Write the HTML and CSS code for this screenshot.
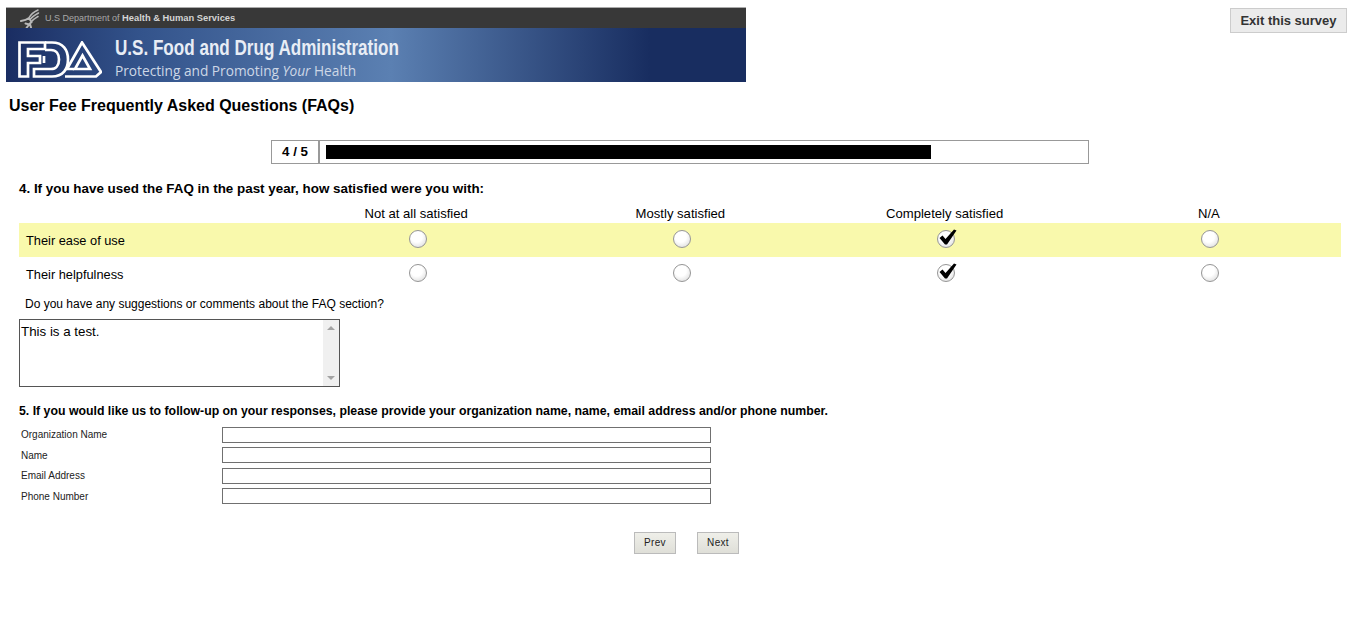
FILE: index.html
```html
<!DOCTYPE html>
<html lang="en">
<head>
<meta charset="utf-8">
<title>User Fee Frequently Asked Questions (FAQs)</title>
<link rel="stylesheet" href="styles.css">
</head>
<body>
<header class="top">
  <div class="banner">
    <div class="hhs">
      <svg class="eagle" width="20" height="20" viewBox="0 0 20 20" fill="none" stroke="#b8b8b8" stroke-linecap="round">
        <path d="M18 1 C14 3 11 5 9.500 8" stroke-width="1.600"/>
        <path d="M18.500 4 C15 6 12.500 7.500 10.500 10" stroke-width="1.600"/>
        <path d="M18 7.500 C15.500 9 13.500 10 12 12" stroke-width="1.600"/>
        <path d="M1 12 C4 11.500 7 10.500 9 9 L11.500 13 L9 15.500 L5.500 14.500 M9 15.500 L6.500 19 M10 15 L11 18.500" stroke-width="2"/>
      </svg>
      <span class="hhs-text">U.S Department of <b>Health &amp; Human Services</b></span>
    </div>
    <div class="fda">
      <svg class="fda-logo" width="84" height="37" viewBox="0 0 84 37" fill="none" stroke="#fff" stroke-width="2.700">
        <path d="M1.500 1.500 H27 V8 H10 V15 H22 V22 H10 V35.500 H1.500 Z"/>
        <path d="M27 1.500 H34 C45 1.500 50 9 50 18.500 C50 28 45 35.500 34 35.500 H16 V28 H33 C38 28 41 24 41 18.500 C41 13 38 9 33 9 H27"/>
        <path d="M26 15 V22"/>
        <path d="M47 35.500 H78 L83 31 L64 1.500 L49 28 H56"/>
        <path d="M57 28 H72 L64.500 14.500 Z"/>
      </svg>
      <div class="fda-text">
        <div class="fda-name">U.S. Food and Drug Administration</div>
        <div class="fda-tag">Protecting and Promoting <i>Your</i> Health</div>
      </div>
    </div>
  </div>
  <button class="exit" type="button">Exit this survey</button>
</header>

<h1 class="title">User Fee Frequently Asked Questions (FAQs)</h1>

<div class="progress">
  <div class="count">4 / 5</div>
  <div class="track"><div class="fill"></div></div>
</div>

<main class="survey">
  <p class="question q4">4. If you have used the FAQ in the past year, how satisfied were you with:</p>
  <table class="matrix">
    <thead>
      <tr>
        <th></th>
        <th>Not at all satisfied</th>
        <th>Mostly satisfied</th>
        <th>Completely satisfied</th>
        <th>N/A</th>
      </tr>
    </thead>
    <tbody>
      <tr class="hl">
        <td class="rowlabel">Their ease of use</td>
        <td><span class="radio"></span></td>
        <td><span class="radio"></span></td>
        <td><span class="radio"><svg class="check" width="18" height="17" viewBox="0 0 18 17"><path d="M0.500 9 L3.500 6.500 L6.500 10 L15 0.500 L17.500 1.500 L8 15.500 L6 15.500 Z" fill="#000"/></svg></span></td>
        <td><span class="radio"></span></td>
      </tr>
      <tr>
        <td class="rowlabel">Their helpfulness</td>
        <td><span class="radio"></span></td>
        <td><span class="radio"></span></td>
        <td><span class="radio"><svg class="check" width="18" height="17" viewBox="0 0 18 17"><path d="M0.500 9 L3.500 6.500 L6.500 10 L15 0.500 L17.500 1.500 L8 15.500 L6 15.500 Z" fill="#000"/></svg></span></td>
        <td><span class="radio"></span></td>
      </tr>
    </tbody>
  </table>
  <p class="comment-label">Do you have any suggestions or comments about the FAQ section?</p>
  <div class="comment">
    <div class="comment-text">This is a test.</div>
    <div class="scroll">
      <span class="arrow up"></span>
      <span class="arrow down"></span>
    </div>
  </div>

  <p class="question q5">5. If you would like us to follow-up on your responses, please provide your organization name, name, email address and/or phone number.</p>
  <div class="contact">
    <label class="field"><span>Organization Name</span><input type="text"></label>
    <label class="field"><span>Name</span><input type="text"></label>
    <label class="field"><span>Email Address</span><input type="text"></label>
    <label class="field"><span>Phone Number</span><input type="text"></label>
  </div>
  <div class="nav">
    <button class="navbtn" type="button">Prev</button>
    <button class="navbtn" type="button">Next</button>
  </div>
</main>
</body>
</html>
```
FILE: styles.css
```css
* { box-sizing: border-box; }
html, body { margin: 0; padding: 0; background: #fff; }
body { font-family: "Liberation Sans", Arial, sans-serif; color: #000; height: 639px; overflow: hidden; }

.top { display: flex; justify-content: space-between; align-items: flex-start; padding: 7px 11px 0 6px; }
.banner { width: 740px; height: 75px; display: flex; flex-direction: column; }
.hhs { height: 21px; background: #383838; border-top: 1px solid #aaa; display: flex; align-items: center; padding-left: 14px; gap: 5px; }
.eagle { flex: none; margin-top: 1px; }
.hhs-text { font-size: 9px; color: #a9a9a9; }
.hhs-text b { color: #d4d4d4; font-size: 9.35px; }
.fda { flex: 1; display: flex; align-items: flex-start; background: linear-gradient(90deg, #1a2d62 0, #33538b 18%, #5b80b2 52%, #182d60 87%, #182d60 100%); }
.fda-logo { flex: none; margin: 13px 0 0 12px; }
.fda-text { margin-left: 13px; }
.fda-name { font-size: 22px; font-weight: 700; color: #e8edf5; line-height: 24px; margin-top: 8px; white-space: nowrap; transform: scaleX(.776); transform-origin: left center; }
.fda-tag { font-family: "Open Sans", sans-serif; font-size: 13.7px; color: #cdd7e6; line-height: 18px; margin-top: 2px; white-space: nowrap; }

.exit { width: 117px; height: 25px; margin-top: 1px; border: 1px solid #ccc; background: #ebebeb; color: #333; font: 700 13px "Liberation Sans", sans-serif; padding: 0; }

.title { font-size: 16px; font-weight: 700; margin: 15px 0 0 9px; line-height: 18px; }

.progress { display: flex; width: 818px; height: 24px; margin: 25px 0 0 271px; border: 1px solid #999; }
.count { width: 48px; border-right: 2px solid #999; font-size: 13.33px; font-weight: 700; text-align: center; line-height: 22px; }
.track { flex: 1; padding: 4px 6px; }
.fill { width: 605px; height: 14px; background: #000; }

.survey { padding: 0 17px 0 19px; }
.question { margin: 0; font-weight: 700; font-size: 13.4px; line-height: 16px; }
.q4 { margin-top: 17px; }

.matrix { width: 100%; border-collapse: collapse; table-layout: fixed; margin-top: 8px; font-size: 12.8px; }
.matrix th { font-weight: 400; font-size: 13.1px; height: 18px; padding: 0; text-align: center; line-height: 16px; }
.matrix th:first-child, .matrix td:first-child { width: 265px; }
.matrix td { height: 34px; padding: 0; text-align: center; }
.matrix td.rowlabel { text-align: left; padding-left: 7px; }
.matrix .hl td { background: #f9f9ac; }

.radio { display: inline-block; position: relative; width: 18px; height: 18px; border-radius: 50%; border: 1px solid #969696; background: radial-gradient(circle at 42% 35%, #fff 40%, #e6e6e6 75%, #c4c4c4 100%); vertical-align: middle; margin: -3px 0 0 3px; }
.check { position: absolute; left: 1px; top: -2px; }

.comment-label { margin: 0 0 0 6px; font-size: 12px; line-height: 14px; padding-top: 6px; }

.comment { display: flex; width: 321px; height: 68px; margin-top: 8px; border: 1px solid #555; }
.comment-text { flex: 1; font-size: 13.33px; line-height: 16px; padding: 4px 1px; }
.scroll { width: 16px; background: #f0f0f0; display: flex; flex-direction: column; justify-content: space-between; align-items: center; padding: 6px 0; }
.arrow { width: 0; height: 0; border-left: 4px solid transparent; border-right: 4px solid transparent; }
.arrow.up { border-bottom: 4px solid #a3a3a3; }
.arrow.down { border-top: 4px solid #a3a3a3; }

.q5 { margin-top: 16px; font-size: 12.3px; }

.contact { margin-top: 7px; display: flex; flex-direction: column; gap: 3.67px; }
.field { display: flex; align-items: center; height: 17px; font-size: 10px; color: #222; padding-left: 2px; }
.field span { width: 201px; }
.field input { width: 489px; height: 16px; border: 1px solid #707070; padding: 0; background: #fff; }

.nav { display: flex; gap: 21px; margin: 27px 0 0 615px; }
.navbtn { width: 42px; height: 22px; border: 1px solid #bbb; background: linear-gradient(#efefe9, #dfdfd8); font: 10px "Liberation Sans", sans-serif; color: #222; padding: 0; letter-spacing: .3px; }
```
